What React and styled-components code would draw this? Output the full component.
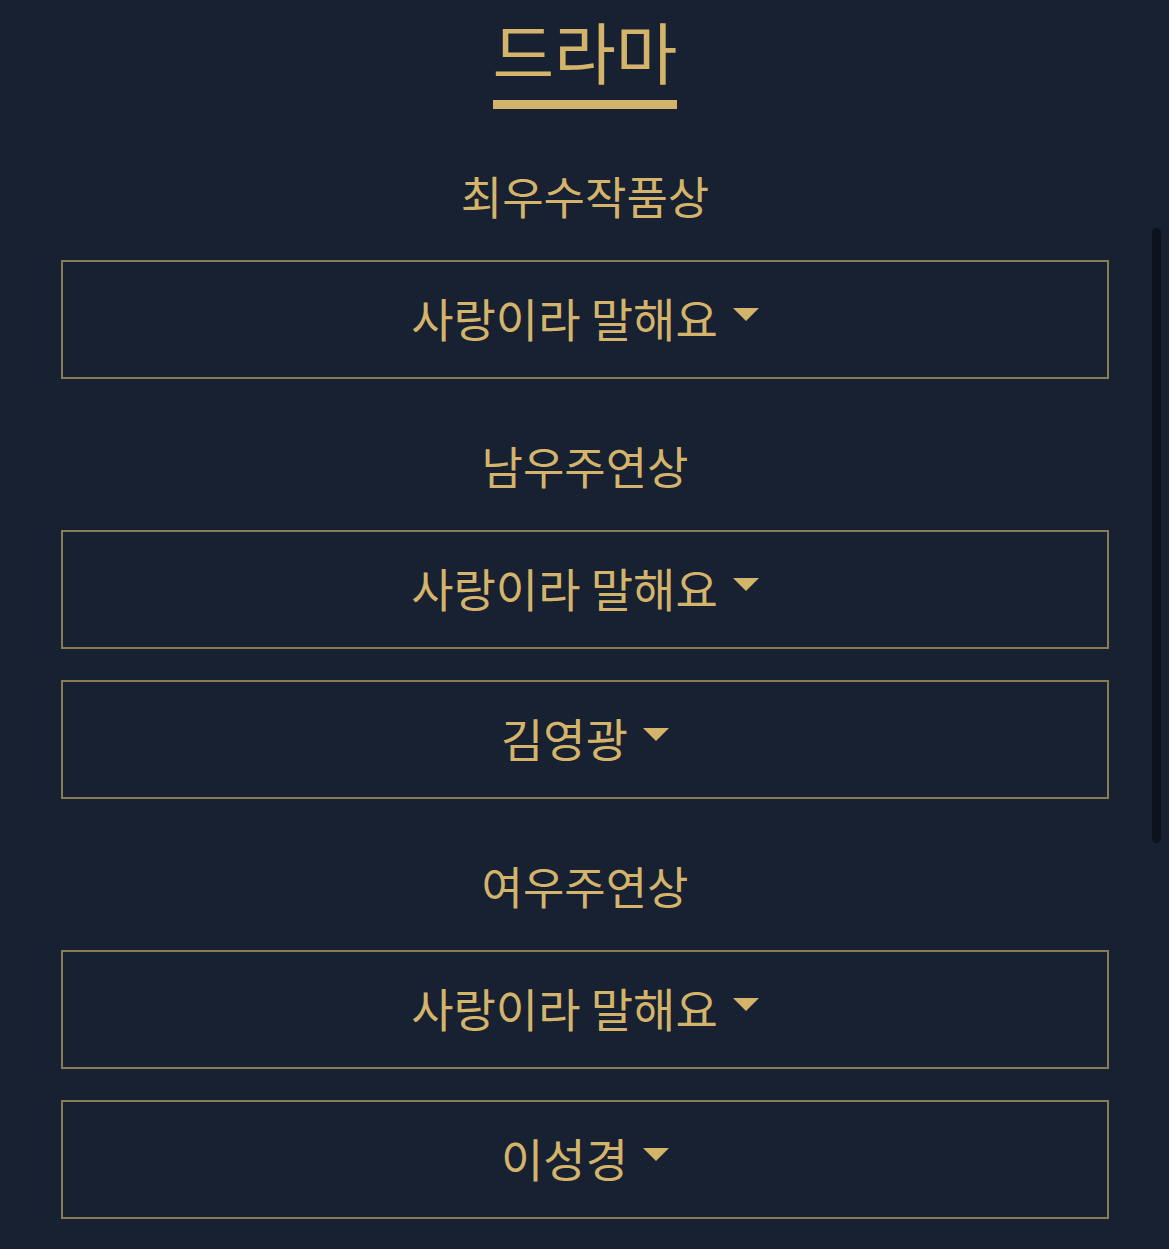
import styled, { createGlobalStyle } from "styled-components";

const GlobalStyle = createGlobalStyle`
  html, body {
    margin: 0;
    padding: 0;
    background: #172132;
  }
  body {
    font-family: "Noto Sans CJK KR", "Noto Sans", sans-serif;
  }
`;

const sections = [
  { title: "최우수작품상", picks: ["사랑이라 말해요"] },
  { title: "남우주연상", picks: ["사랑이라 말해요", "김영광"] },
  { title: "여우주연상", picks: ["사랑이라 말해요", "이성경"] },
];

function App() {
  return (
    <Page>
      <GlobalStyle />
      <Header>
        <Title>드라마</Title>
      </Header>
      {sections.map((s) => (
        <Section key={s.title}>
          <Category>{s.title}</Category>
          <Picks>
            {s.picks.map((p, i) => (
              <Select key={i}>
                <Label>{p}</Label>
                <Caret />
              </Select>
            ))}
          </Picks>
        </Section>
      ))}
      <ScrollThumb />
    </Page>
  );
}

export default App;

const Page = styled.div`
  position: relative;
  width: 1169px;
  height: 1249px;
  overflow: hidden;
  box-sizing: border-box;
  padding: 11px 60px 0 61px;
  background: #172132;
  color: #d4b46b;
`;

const Header = styled.div`
  display: flex;
  justify-content: center;
`;

const Title = styled.h1`
  margin: 0;
  font-size: 67px;
  font-weight: 400;
  line-height: 78px;
  padding-bottom: 11px;
  border-bottom: 9px solid #d4b46b;
  letter-spacing: 0;
`;

const Section = styled.section`
  display: flex;
  flex-direction: column;
  margin-top: 57px;
`;

const Category = styled.h2`
  margin: 0 0 34px;
  text-align: center;
  font-size: 45px;
  font-weight: 400;
  line-height: 60px;
`;

const Picks = styled.div`
  display: flex;
  flex-direction: column;
  gap: 31px;
`;

const Select = styled.div`
  box-sizing: border-box;
  height: 119px;
  border: 2px solid #877c53;
  display: flex;
  align-items: center;
  justify-content: center;
  gap: 15px;
`;

const Label = styled.span`
  font-size: 46px;
  line-height: 1;
  margin-top: -6px;
`;

const Caret = styled.span`
  width: 0;
  height: 0;
  margin-top: -10px;
  border-left: 13px solid transparent;
  border-right: 13px solid transparent;
  border-top: 13px solid #d4b46b;
`;

const ScrollThumb = styled.div`
  position: absolute;
  top: 228px;
  right: 8px;
  width: 9px;
  height: 615px;
  border-radius: 5px;
  background: #0d131c;
`;
